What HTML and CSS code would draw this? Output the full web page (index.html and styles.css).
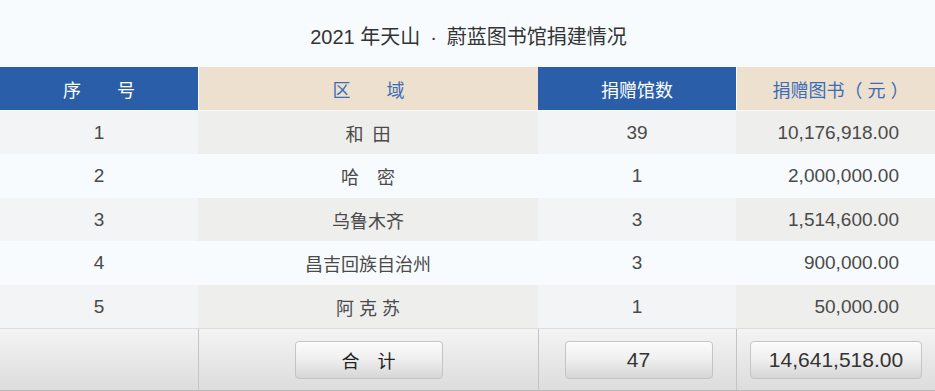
FILE: index.html
```html
<!DOCTYPE html>
<html lang="zh-CN">
<head>
<meta charset="utf-8">
<title>2021 年天山 · 蔚蓝图书馆捐建情况</title>
<link rel="stylesheet" href="styles.css">
</head>
<body>
<div class="page">
  <h1 class="title">2021 年天山&ensp;·&ensp;蔚蓝图书馆捐建情况</h1>
  <div class="table">
    <div class="row head">
      <div class="cell c1 blue">序　　号</div>
      <div class="cell c2 beige">区　　域</div>
      <div class="cell c3 blue">捐赠馆数</div>
      <div class="cell c4 beige">捐赠图书（<span class="unit">元</span>）</div>
    </div>
    <div class="row odd h43">
      <div class="cell c1">1</div>
      <div class="cell c2">和&ensp;田</div>
      <div class="cell c3">39</div>
      <div class="cell c4 num">10,176,918.00</div>
    </div>
    <div class="row even h44">
      <div class="cell c1">2</div>
      <div class="cell c2">哈　密</div>
      <div class="cell c3">1</div>
      <div class="cell c4 num">2,000,000.00</div>
    </div>
    <div class="row odd h43">
      <div class="cell c1">3</div>
      <div class="cell c2">乌鲁木齐</div>
      <div class="cell c3">3</div>
      <div class="cell c4 num">1,514,600.00</div>
    </div>
    <div class="row even h44">
      <div class="cell c1">4</div>
      <div class="cell c2">昌吉回族自治州</div>
      <div class="cell c3">3</div>
      <div class="cell c4 num">900,000.00</div>
    </div>
    <div class="row odd h43">
      <div class="cell c1">5</div>
      <div class="cell c2">阿 克 苏</div>
      <div class="cell c3">1</div>
      <div class="cell c4 num">50,000.00</div>
    </div>
    <div class="row total">
      <div class="cell c1"></div>
      <div class="cell c2 sep"><span class="btn btn-label">合　计</span></div>
      <div class="cell c3 sep"><span class="btn btn-count">47</span></div>
      <div class="cell c4 sep"><span class="btn btn-sum">14,641,518.00</span></div>
    </div>
  </div>
</div>
</body>
</html>
```

FILE: styles.css
```css
* { box-sizing: border-box; }
html, body {
  margin: 0;
  padding: 0;
  background: #f7fbfe;
}
body {
  font-family: "Liberation Sans", "Noto Sans CJK SC", sans-serif;
  color: #4a4a4a;
}
.page {
  width: 935px;
}
.title {
  margin: 0;
  height: 67px;
  display: flex;
  align-items: center;
  justify-content: center;
  font-size: 20px;
  font-weight: normal;
  color: #333;
  padding-top: 3px;
  padding-left: 2px;
}
.table {
  display: flex;
  flex-direction: column;
}
.row {
  display: grid;
  grid-template-columns: 198px 340px 198px 199px;
}
.cell {
  display: flex;
  align-items: center;
  justify-content: center;
  font-size: 19px;
}
.head {
  height: 44px;
  border-bottom: 1px solid #f7fbfe;
}
.head .cell { font-size: 18px; }
.head .c2, .head .c4 { border-left: 1px solid #f7fbfe; }
.head .c4 { padding-left: 9px; }
.unit { padding: 0 5px; }
.blue { background: #2a5ea8; color: #fff; }
.beige { background: #ede0cf; color: #3b6db6; }
.h43 { height: 43px; }
.h44 { height: 44px; }
.odd .c1, .odd .c3 { background: #f2f4f5; }
.odd .c2, .odd .c4 { background: #eeeeec; }
.c2 { font-size: 18px; }
.num {
  justify-content: flex-end;
  padding-right: 36px;
}
.total {
  height: 63px;
  border-top: 1px solid #dcdcdc;
  border-bottom: 1px solid #b9b9b9;
  background: linear-gradient(#f4f4f4, #dcdcdc);
}
.sep { border-left: 1px solid #c4c4c4; }
.btn {
  display: flex;
  align-items: center;
  justify-content: center;
  height: 38px;
  border: 1px solid #c4c4c4;
  border-radius: 4px;
  background: linear-gradient(#fbfbfb, #f0f0f0 45%, #d6d6d6);
  color: #333;
  font-size: 21px;
  box-shadow: inset 0 1px 0 #fff;
}
.btn-label { width: 148px; font-size: 18px; color: #222; }
.btn-count { width: 148px; margin-left: 2px; }
.btn-sum { width: 172px; }
```
